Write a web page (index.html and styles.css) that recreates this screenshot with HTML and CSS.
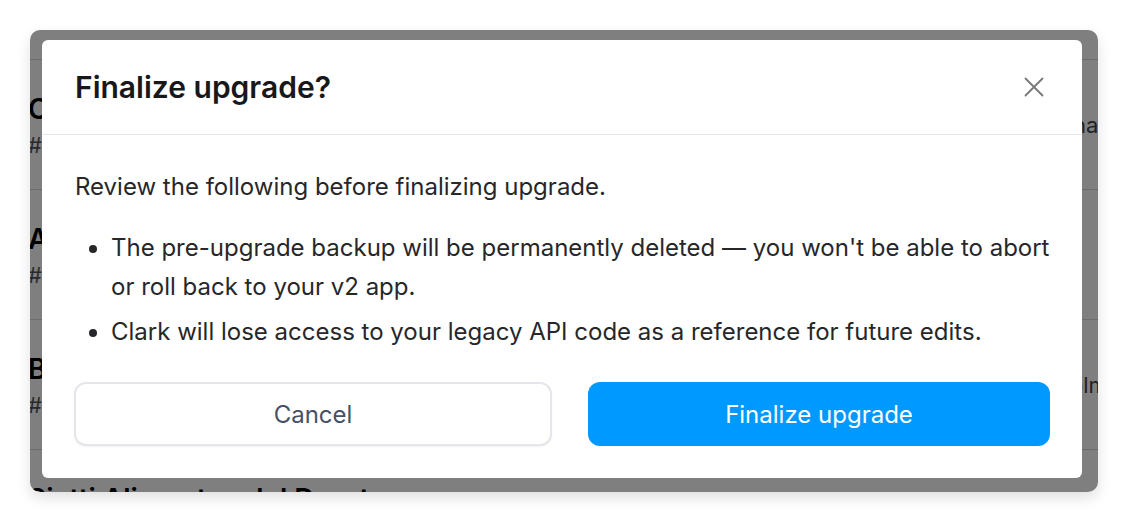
FILE: index.html
```html
<!DOCTYPE html>
<html lang="en">
<head>
  <meta charset="UTF-8">
  <title>Finalize upgrade</title>
  <link rel="stylesheet" href="styles.css">
</head>
<body>
  <div class="frame">
    <div class="list">
      <div class="row">
        <div class="row-main"><div class="row-name">Northwind Traders</div><div class="row-id">#1021</div></div>
        <div class="row-side">Lisbon</div>
      </div>
      <div class="row">
        <div class="row-main"><div class="row-name">Clark Consulting</div><div class="row-id">#1022</div></div>
        <div class="row-side">Argentina</div>
      </div>
      <div class="row">
        <div class="row-main"><div class="row-name">Acme Holdings</div><div class="row-id">#1023</div></div>
        <div class="row-side">Lima</div>
      </div>
      <div class="row">
        <div class="row-main"><div class="row-name">Bright Labs</div><div class="row-id">#1024</div></div>
        <div class="row-side">Stockholm</div>
      </div>
      <div class="row">
        <div class="row-main"><div class="row-name">Siatti Alimentos del Duarte</div><div class="row-id">#1025</div></div>
        <div class="row-side">Oslo</div>
      </div>
    </div>

    <div class="overlay">
      <div class="modal">
        <div class="modal-header">
          <h2>Finalize upgrade?</h2>
          <button class="close-btn" aria-label="Close">
            <svg width="24" height="24" viewBox="0 0 24 24" fill="none" stroke="currentColor" stroke-width="1.8" stroke-linecap="round">
              <path d="M3.5 3.5L20.5 20.5M20.5 3.5L3.5 20.5"/>
            </svg>
          </button>
        </div>
        <div class="modal-body">
          <p>Review the following before finalizing upgrade.</p>
          <ul>
            <li>The pre-upgrade backup will be permanently deleted — you won't be able to abort or roll back to your v2 app.</li>
            <li>Clark will lose access to your legacy API code as a reference for future edits.</li>
          </ul>
          <div class="actions">
            <button class="btn btn-cancel">Cancel</button>
            <button class="btn btn-primary">Finalize upgrade</button>
          </div>
        </div>
      </div>
    </div>
  </div>
</body>
</html>
```

FILE: styles.css
```css
body {
  margin: 0;
  background: #ffffff;
  font-family: Inter, "Noto Sans", sans-serif;
}

.frame {
  position: relative;
  margin: 30px;
  width: 1068px;
  height: 462px;
  border-radius: 10px;
  overflow: hidden;
  background: #ffffff;
  box-shadow: 0 6px 14px rgba(0, 0, 0, 0.12);
}

.list {
  margin-top: -100px;
}

.row {
  height: 129px;
  border-bottom: 1px solid #d8d8d8;
  display: flex;
  align-items: center;
  justify-content: space-between;
  margin-left: -2px;
  margin-right: -100px;
}

.row-name {
  font-size: 28px;
  font-weight: 600;
  color: #000;
  white-space: nowrap;
}

.row-id {
  font-size: 22px;
  color: #555;
  margin-top: 6px;
}

.row-side {
  width: 200px;
  font-size: 22px;
  color: #444;
}

.overlay {
  position: absolute;
  inset: 0;
  background: rgba(0, 0, 0, 0.5);
  padding: 10px 12px;
}

.modal {
  width: 1040px;
  height: 438px;
  background: #ffffff;
  border-radius: 6px;
  box-sizing: border-box;
}

.modal-header {
  height: 95px;
  box-sizing: border-box;
  border-bottom: 1px solid #e6e6e9;
  display: flex;
  align-items: center;
  justify-content: space-between;
  padding: 0 36px 0 33px;
}

.modal-header h2 {
  margin: 0;
  font-size: 30px;
  font-weight: 600;
  color: #18181b;
}

.close-btn {
  border: none;
  background: none;
  padding: 0;
  color: #777777;
  display: flex;
}

.modal-body {
  padding: 36px 32px 32px 33px;
  color: #27272a;
  font-size: 24px;
}

.modal-body p {
  margin: 0 0 25px;
  line-height: 32px;
}

.modal-body ul {
  margin: 0;
  padding-left: 36px;
  line-height: 39px;
}

.modal-body li + li {
  margin-top: 6px;
}

.actions {
  display: flex;
  gap: 36px;
  margin: 31px 0 0 -1px;
}

.btn {
  height: 64px;
  border-radius: 12px;
  font-family: inherit;
  font-size: 24px;
  cursor: pointer;
}

.btn-cancel {
  width: 478px;
  background: #ffffff;
  border: 2px solid #e6e6ea;
  color: #475064;
  box-shadow: 0 1px 2px rgba(0, 0, 0, 0.05);
}

.btn-primary {
  width: 462px;
  background: #0099ff;
  border: none;
  color: #ffffff;
}
```
